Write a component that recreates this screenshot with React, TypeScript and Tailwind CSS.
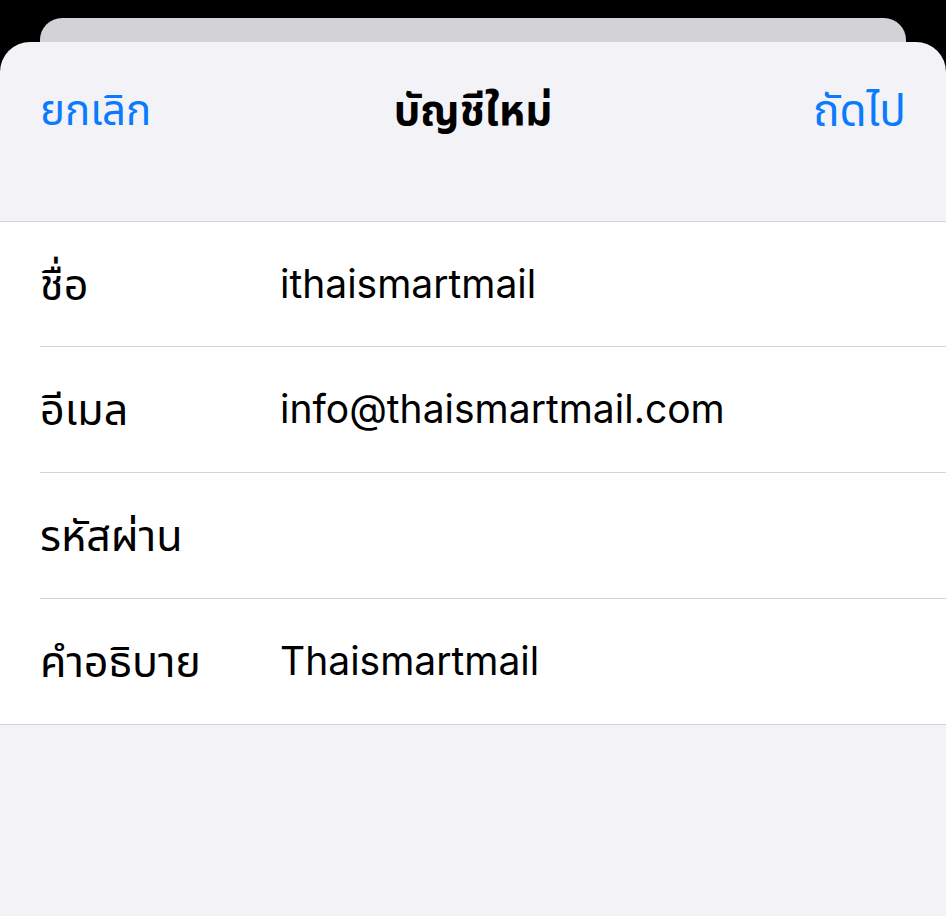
const rows = [
  { label: 'ชื่อ', value: 'ithaismartmail' },
  { label: 'อีเมล', value: 'info@thaismartmail.com' },
  { label: 'รหัสผ่าน', value: '' },
  { label: 'คำอธิบาย', value: 'Thaismartmail' },
];

export default function App() {
  return (
    <div
      className="w-[946px] h-[916px] bg-black flex flex-col overflow-hidden"
      style={{ fontFamily: 'Inter, "Noto Sans", "Noto Sans Thai", sans-serif' }}
    >
      <div className="h-[18px] shrink-0" />
      <div className="mx-[40px] h-[24px] shrink-0 bg-[#d2d2d7] rounded-t-[22px]" />
      <div className="flex-1 bg-[#f2f2f7] rounded-t-[30px] flex flex-col">
        <div className="h-[179px] shrink-0 px-[40px] pt-[42px]">
          <div className="relative flex items-center justify-between h-[52px]">
            <button className="text-[42px] text-[#0a7aff] leading-none">ยกเลิก</button>
            <div className="absolute left-1/2 -translate-x-1/2 text-[42px] font-bold text-black leading-none">
              บัญชีใหม่
            </div>
            <button className="text-[44px] text-[#0a7aff] leading-none">ถัดไป</button>
          </div>
        </div>
        <div className="bg-white border-y border-[#d3d3d8]">
          {rows.map((row, index) => {
            const last = index === rows.length - 1;
            const height = index === 0 || last ? 'h-[125px]' : 'h-[126px]';
            return (
              <div key={row.label} className="pl-[40px]">
                <div
                  className={
                    last
                      ? `${height} flex items-center`
                      : `${height} flex items-center border-b border-[#d3d3d8]`
                  }
                >
                  <div className="w-[240px] text-[43px] text-black">{row.label}</div>
                  <div className="text-[39px] text-black">{row.value}</div>
                </div>
              </div>
            );
          })}
        </div>
      </div>
    </div>
  );
}
